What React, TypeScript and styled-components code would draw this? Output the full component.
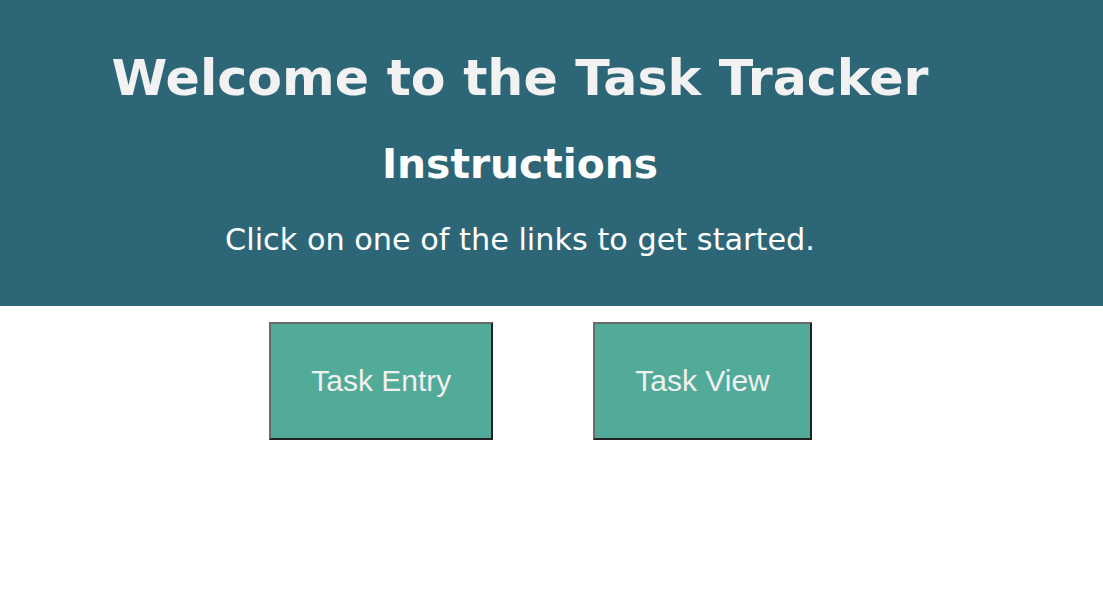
import React from "react";
import styled, { createGlobalStyle } from "styled-components";

const Global = createGlobalStyle`
  html, body { margin: 0; padding: 0; background: #ffffff; }
  body { font-family: "DejaVu Sans", Verdana, sans-serif; }
`;

const Header = styled.header`
  background: #2d6777;
  padding: 49px 63px 0 0;
  height: 306px;
  box-sizing: border-box;
  text-align: center;
`;

const Title = styled.h1`
  margin: 0;
  font-size: 50.6px;
  line-height: 58px;
  font-weight: bold;
  color: #f2f2f2;
`;

const Subtitle = styled.h2`
  margin: 34px 0 0;
  font-size: 40.8px;
  line-height: 47px;
  font-weight: bold;
  color: #ffffff;
`;

const Text = styled.p`
  margin: 34px 0 0;
  font-size: 30.3px;
  line-height: 35px;
  color: #ffffff;
`;

const Links = styled.nav`
  display: flex;
  justify-content: center;
  gap: 100px;
  margin-top: 16px;
  padding-right: 22px;
`;

const LinkButton = styled.button`
  background: #52aa98;
  color: #f0f0f0;
  font-family: "Liberation Sans", Arial, sans-serif;
  font-size: 30px;
  line-height: 34px;
  padding: 40px;
  border-width: 2px;
  border-style: solid;
  border-top-color: #6b6b6b;
  border-left-color: #6b6b6b;
  border-bottom-color: #222222;
  border-right-color: #222222;
  cursor: pointer;
`;

export default function App() {
  return (
    <>
      <Global />
      <Header>
        <Title>Welcome to the Task Tracker</Title>
        <Subtitle>Instructions</Subtitle>
        <Text>Click on one of the links to get started.</Text>
      </Header>
      <Links>
        <LinkButton>Task Entry</LinkButton>
        <LinkButton>Task View</LinkButton>
      </Links>
    </>
  );
}
